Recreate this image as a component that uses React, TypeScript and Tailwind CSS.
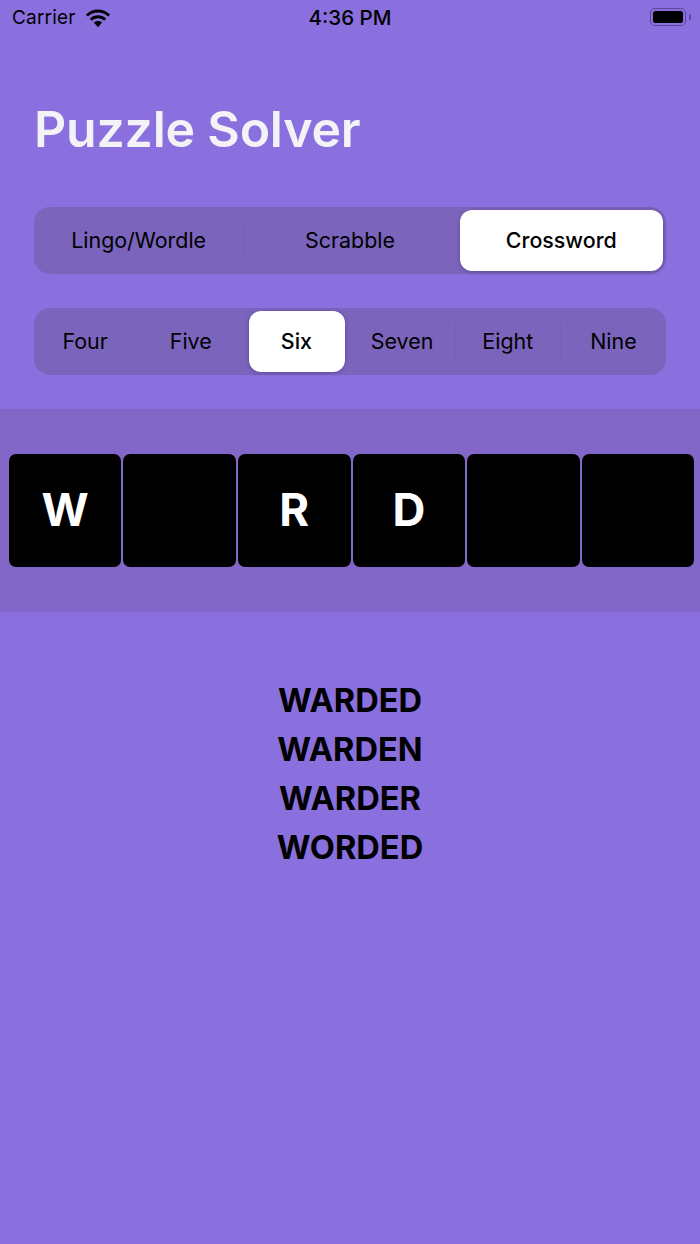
import React from 'react';

const modes = ['Lingo/Wordle', 'Scrabble', 'Crossword'];
const lengths = ['Four', 'Five', 'Six', 'Seven', 'Eight', 'Nine'];
const tiles = ['W', '', 'R', 'D', '', ''];
const results = ['WARDED', 'WARDEN', 'WARDER', 'WORDED'];

function StatusBar() {
  return (
    <div className="flex h-[36px] items-center justify-between pl-[12px] pr-[9px] text-[19px] text-black">
      <div className="flex items-center gap-[9px]">
        <span className="tracking-[0.2px]">Carrier</span>
        <svg width="26" height="20" viewBox="0 0 26 20" className="mt-[1px]">
          <path d="M13 3.6c3.9 0 7.4 1.5 10.1 4l2-2.2C21.800 2.300 17.600.4 13 .4S4.200 2.300.900 5.400l2 2.200c2.700-2.500 6.200-4 10.100-4z" fill="#000" />
          <path d="M13 9.300c2.400 0 4.500.900 6.200 2.400l2-2.200C19 7.400 16.100 6.200 13 6.200S7 7.400 4.800 9.500l2 2.200c1.700-1.500 3.800-2.400 6.200-2.400z" fill="#000" />
          <path d="M13 12c-1.600 0-3 .600-4.100 1.600L13 18.200l4.100-4.600C16 12.600 14.600 12 13 12z" fill="#000" />
        </svg>
      </div>
      <span className="absolute left-0 right-0 pt-[1px] text-center text-[20.500px] font-medium">4:36 PM</span>
      <div className="mb-[2px] flex items-center gap-[3px]">
        <div className="flex h-[18px] w-[36px] items-center justify-center rounded-[5px] border-[1.500px] border-[#5b479f]">
          <div className="h-[12px] w-[30px] rounded-[2.500px] bg-black" />
        </div>
        <div className="h-[6px] w-[2px] rounded-r-[2px] bg-[#5b479f]" />
      </div>
    </div>
  );
}

function Segmented({
  items,
  active,
  inset,
  labelPad = '',
}: {
  items: string[];
  active: string;
  inset: string;
  labelPad?: string;
}) {
  return (
    <div className="flex h-[67px] rounded-[16px] bg-[#7a64bc]">
      <div className="-mx-[1px] flex flex-1">
        {items.map((item, i) => {
          const selected = item === active;
          const next = items[i + 1];
          const showLine = next && !selected && next !== active;
          return (
            <div key={item} className="relative flex flex-1 items-center justify-center py-[3px]">
              {selected && (
                <div className={`absolute inset-y-[3px] rounded-[12px] bg-white shadow-[0_1px_4px_rgba(60,40,120,0.45)] ${inset}`} />
              )}
              <span className={`relative text-[21.400px] text-black ${labelPad} ${selected ? 'font-medium' : ''}`}>{item}</span>
              {showLine && <div className="absolute right-0 top-[13px] h-[42px] w-[1px] bg-[#7661b7]" />}
            </div>
          );
        })}
      </div>
    </div>
  );
}

export default function App() {
  return (
    <div
      className="relative min-h-[1244px] w-[700px] bg-[#8a6fdf]"
      style={{ fontFamily: 'Inter, "Liberation Sans", sans-serif' }}
    >
      <StatusBar />

      <div className="px-[34px]">
        <h1 className="mt-[60px] h-[66px] text-[50px] font-semibold leading-[66px] tracking-[-0.2px] text-[#f2f2f7]">
          Puzzle Solver
        </h1>
        <div className="mt-[45px]">
          <Segmented items={modes} active="Crossword" inset="inset-x-[4px]" />
        </div>
        <div className="mt-[34px]">
          <Segmented items={lengths} active="Six" inset="inset-x-[5px]" labelPad="pr-[1.500px]" />
        </div>
      </div>

      <div className="mt-[34px] flex h-[203px] items-center gap-[2px] bg-[#8267c9] pl-[8.700px] pr-[5.700px]">
        {tiles.map((letter, i) => (
          <div
            key={i}
            className="flex h-[113px] flex-1 items-center justify-center rounded-[7px] bg-black text-[45.500px] font-bold text-white"
          >
            {letter}
          </div>
        ))}
      </div>

      <div className="mt-[64px] flex flex-col items-center text-[32.600px] font-bold leading-[49px] text-black">
        {results.map((word) => (
          <div key={word}>{word}</div>
        ))}
      </div>
    </div>
  );
}
